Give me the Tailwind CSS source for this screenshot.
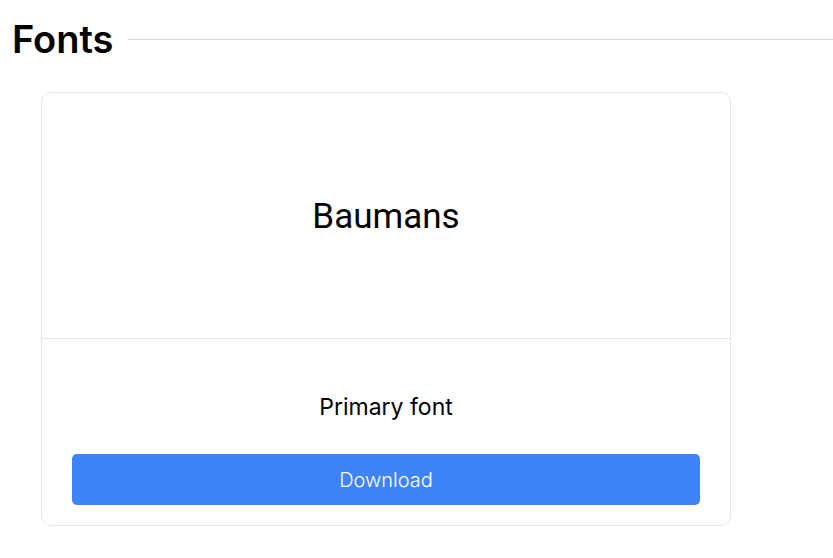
<!DOCTYPE html>
<html lang="en">
<head>
<meta charset="utf-8">
<meta name="viewport" content="width=device-width, initial-scale=1">
<title>Fonts</title>
<script src="https://cdn.jsdelivr.net/npm/@tailwindcss/browser@4"></script>
</head>
<body class="bg-white text-black font-['Inter',sans-serif]">
<main class="pt-4">
  <header class="flex items-center gap-[15px] pl-3">
    <h1 class="text-[38px] leading-[46px] font-semibold">Fonts</h1>
    <div class="h-px flex-1 bg-gray-300"></div>
  </header>
  <article class="mt-[30px] ml-[41px] mr-[102px] rounded-[10px] border border-gray-200">
    <div class="flex h-[246px] items-center justify-center border-b border-gray-200 pt-1">
      <p class="text-[35px] font-[Roboto,sans-serif]">Baumans</p>
    </div>
    <div class="px-[30px] pt-12 pb-5 text-center">
      <h2 class="text-[23px] leading-10">Primary font</h2>
      <button type="button" class="mt-[27px] block h-[51px] w-full rounded-[5px] bg-[#3f83f8] text-xl font-light text-white">Download</button>
    </div>
  </article>
</main>
</body>
</html>
